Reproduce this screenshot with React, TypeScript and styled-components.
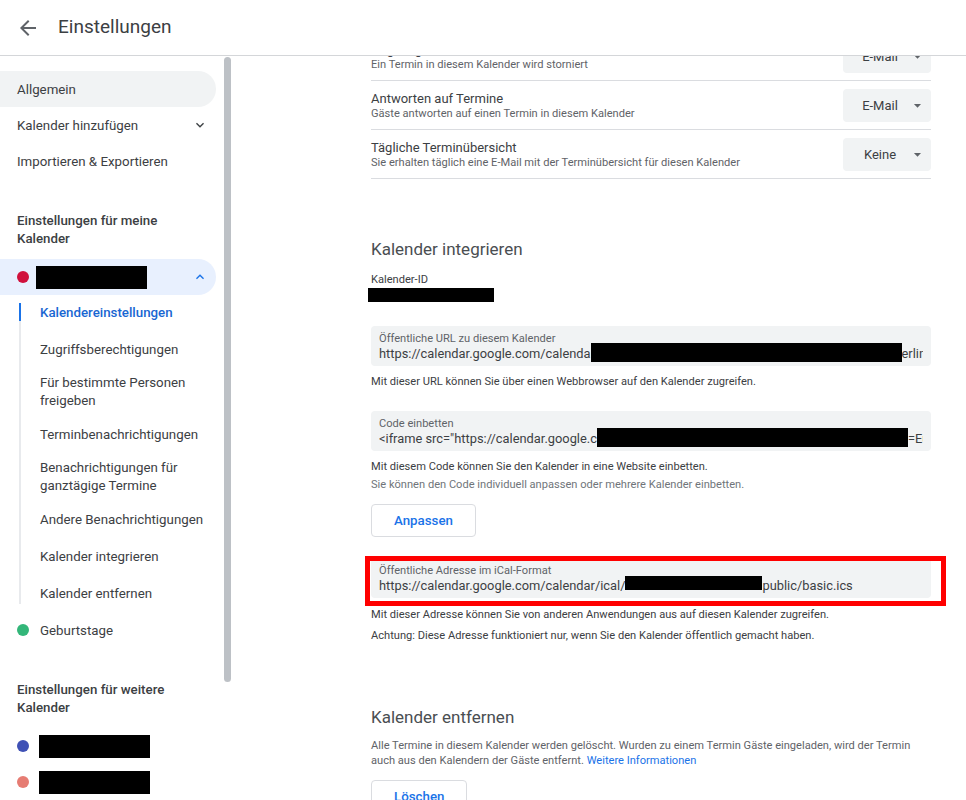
import React, { useLayoutEffect, useRef } from 'react'
import styled, { createGlobalStyle } from 'styled-components'

const GlobalStyle = createGlobalStyle`
  html, body {
    margin: 0;
    height: 100%;
  }
  body {
    font-family: Roboto, 'Liberation Sans', Arial, sans-serif;
    color: #3c4043;
    background: #ffffff;
    overflow: hidden;
  }
  #root {
    height: 100%;
  }
`

const Page = styled.div`
  display: flex;
  flex-direction: column;
  height: 100vh;
`

const Header = styled.header`
  flex: 0 0 auto;
  height: 55px;
  display: flex;
  align-items: center;
  border-bottom: 1px solid #d4d6d9;
  background: #ffffff;
`

const BackButton = styled.button`
  width: 40px;
  height: 40px;
  margin-left: 8px;
  padding: 0;
  border: 0;
  background: none;
  display: flex;
  align-items: center;
  justify-content: center;
  color: #5f6368;
  cursor: pointer;
`

const Title = styled.h1`
  margin: 0 0 2px 10px;
  font-size: 19px;
  font-weight: 400;
  color: #3c4043;
`

const Body = styled.div`
  flex: 1;
  display: flex;
  min-height: 0;
`

/* ---------- sidebar ---------- */

const Sidebar = styled.aside`
  flex: 0 0 232px;
  display: flex;
`

const Nav = styled.nav`
  width: 224px;
  padding-top: 15px;
  overflow: hidden;
`

const ScrollTrack = styled.div`
  width: 8px;
`

const ScrollThumb = styled.div`
  width: 7px;
  height: 625px;
  margin-top: 1px;
  border-radius: 4px;
  background: #bdc1c6;
`

const NavItem = styled.div<{ $bg?: string }>`
  display: flex;
  align-items: center;
  height: 36px;
  margin-right: 8px;
  padding: 0 8px 0 17px;
  border-radius: 0 18px 18px 0;
  font-size: 13.3px;
  color: #3c4043;
  background: ${(p) => p.$bg || 'transparent'};
  cursor: pointer;
`

const NavLabel = styled.span`
  flex: 1;
  white-space: nowrap;
`

const SectionTitle = styled.div`
  padding: 33px 16px 11px 17px;
  font-size: 13.3px;
  font-weight: 500;
  line-height: 18px;
  color: #3c4043;
`

const Dot = styled.span<{ $color: string }>`
  flex: 0 0 12px;
  width: 12px;
  height: 12px;
  margin-right: 11px;
  border-radius: 50%;
  background: ${(p) => p.$color};
`

const Redacted = styled.span<{ $w: number; $h: number; $shift?: number; $top?: number }>`
  display: inline-block;
  width: ${(p) => p.$w}px;
  height: ${(p) => p.$h}px;
  margin-left: ${(p) => p.$shift || 0}px;
  margin-top: ${(p) => p.$top || 0}px;
  margin-bottom: ${(p) => -(p.$top || 0)}px;
  vertical-align: top;
  background: #000000;
`

const SubList = styled.div`
  position: relative;
  width: 176px;
  margin-top: -1px;
  margin-left: 19px;
  padding-left: 21px;

  &::before {
    content: '';
    position: absolute;
    left: 0;
    top: 10px;
    bottom: 8px;
    width: 2px;
    background: #e8eaed;
  }
`

const SubItem = styled.div<{ $active?: boolean }>`
  position: relative;
  display: flex;
  align-items: center;
  min-height: 37px;
  padding: 6px 0;
  box-sizing: border-box;
  font-size: 13.3px;
  line-height: 18px;
  font-weight: ${(p) => (p.$active ? 500 : 400)};
  color: ${(p) => (p.$active ? '#1967d2' : '#3c4043')};

  &::before {
    content: '';
    display: ${(p) => (p.$active ? 'block' : 'none')};
    position: absolute;
    left: -21px;
    top: 9px;
    width: 2px;
    height: 18px;
    background: #1a73e8;
  }
`

/* ---------- main ---------- */

const Main = styled.main`
  position: relative;
  flex: 1;
  overflow: hidden;
`

const Content = styled.div`
  width: 560px;
  padding: 0 0 40px 139px;
`

const Heading = styled.h2<{ $top: number }>`
  margin: ${(p) => p.$top}px 0 0;
  font-size: 17px;
  font-weight: 400;
  line-height: 24px;
  color: #4a4e52;
`

const Row = styled.div`
  display: flex;
  align-items: center;
  justify-content: space-between;
  padding: 8px 0 7px;
  border-bottom: 1px solid #dadce0;
`

const RowTitle = styled.div`
  font-size: 13px;
  line-height: 16px;
  color: #3c4043;
`

const RowHint = styled.div`
  font-size: 11.1px;
  line-height: 14px;
  color: #5f6368;
`

const Select = styled.div`
  display: flex;
  align-items: center;
  gap: 4px;
  width: 88px;
  height: 33px;
  box-sizing: border-box;
  padding: 0 5px 0 12px;
  border-radius: 4px;
  background: #f1f3f4;
  font-size: 13px;
  color: #3c4043;
`

const SelectValue = styled.span`
  width: 50px;
  text-align: center;
`

const SmallLabel = styled.div<{ $top: number }>`
  margin-top: ${(p) => p.$top}px;
  font-size: 11.1px;
  line-height: 14px;
  color: #3c4043;
`

const IdValue = styled.div`
  height: 16px;
  font-size: 13px;
  line-height: 16px;
`

const Field = styled.div<{ $top?: number }>`
  height: 40px;
  box-sizing: border-box;
  margin-top: ${(p) => p.$top || 0}px;
  padding: 6px 8px 4px;
  border-radius: 4px;
  background: #f1f3f4;
`

const FieldLabel = styled.div`
  font-size: 11.1px;
  line-height: 14px;
  color: #5f6368;
`

const FieldValue = styled.div`
  margin-top: -3px;
  padding-top: 3px;
  font-size: 12.85px;
  line-height: 16px;
  color: #3c4043;
  white-space: nowrap;
  overflow: hidden;
`

const Helper = styled.p<{ $top: number; $muted?: boolean }>`
  margin: ${(p) => p.$top}px 0 0;
  font-size: 11.1px;
  line-height: 18px;
  color: ${(p) => (p.$muted ? '#70757a' : '#3c4043')};
`

const Paragraph = styled.p`
  margin: 9px 0 0;
  font-size: 11.1px;
  line-height: 15px;
  color: #5f6368;
`

const Link = styled.a`
  color: #1a73e8;
  text-decoration: none;
`

const OutlineButton = styled.button<{ $top: number }>`
  display: block;
  height: 33px;
  margin-top: ${(p) => p.$top}px;
  padding: 0 22px;
  border: 1px solid #dadce0;
  border-radius: 4px;
  background: #ffffff;
  font-family: Roboto, 'Liberation Sans', Arial, sans-serif;
  font-size: 13.3px;
  font-weight: 500;
  color: #1a73e8;
  cursor: pointer;
`

const Highlight = styled.div`
  position: relative;
  margin-top: 21px;

  &::after {
    content: '';
    position: absolute;
    left: -6px;
    right: -15px;
    top: -2px;
    bottom: -8px;
    border: 5px solid #ff0000;
    pointer-events: none;
  }
`

/* ---------- icons ---------- */

const Icon = ({ d, size, color }: { d: string; size: number; color: string }) => (
  <svg width={size} height={size} viewBox="0 0 24 24" fill={color} aria-hidden>
    <path d={d} />
  </svg>
)

const ARROW_BACK = 'M20 11H7.83l5.59-5.59L12 4l-8 8 8 8 1.41-1.41L7.83 13H20v-2z'
const EXPAND_MORE = 'M16.59 8.59L12 13.17 7.41 8.59 6 10l6 6 6-6z'
const EXPAND_LESS = 'M12 8l-6 6 1.41 1.41L12 10.83l4.59 4.58L18 14z'
const DROP_DOWN = 'M7 10l5 5 5-5z'

const Dropdown = ({ value }: { value: string }) => (
  <Select>
    <SelectValue>{value}</SelectValue>
    <Icon d={DROP_DOWN} size={17} color="#5f6368" />
  </Select>
)

const notificationRows = [
  ['Neue Termine', 'Jemand lädt Sie zu einem Termin ein', 'E-Mail'],
  ['Geänderte Termine', 'Jemand ändert einen Termin', 'E-Mail'],
  ['Abgesagte Termine', 'Ein Termin in diesem Kalender wird storniert', 'E-Mail'],
  ['Antworten auf Termine', 'Gäste antworten auf einen Termin in diesem Kalender', 'E-Mail'],
  ['Tägliche Terminübersicht', 'Sie erhalten täglich eine E-Mail mit der Terminübersicht für diesen Kalender', 'Keine'],
]

const subItems = [
  'Kalendereinstellungen',
  'Zugriffsberechtigungen',
  'Für bestimmte Personen freigeben',
  'Terminbenachrichtigungen',
  'Benachrichtigungen für ganztägige Termine',
  'Andere Benachrichtigungen',
  'Kalender integrieren',
  'Kalender entfernen',
]

const App: React.FC = () => {
  const mainRef = useRef<HTMLElement>(null)
  const anchorRef = useRef<HTMLDivElement>(null)

  // the page is shown scrolled down to the "Abgesagte Termine" row
  useLayoutEffect(() => {
    if (mainRef.current && anchorRef.current) {
      mainRef.current.scrollTop = anchorRef.current.offsetTop + 24
    }
  }, [])

  return (
    <Page>
      <GlobalStyle />
      <Header>
        <BackButton aria-label="Zurück">
          <Icon d={ARROW_BACK} size={24} color="#5f6368" />
        </BackButton>
        <Title>Einstellungen</Title>
      </Header>

      <Body>
        <Sidebar>
          <Nav>
            <NavItem $bg="#f1f3f4">
              <NavLabel>Allgemein</NavLabel>
            </NavItem>
            <NavItem>
              <NavLabel>Kalender hinzufügen</NavLabel>
              <Icon d={EXPAND_MORE} size={16} color="#3c4043" />
            </NavItem>
            <NavItem>
              <NavLabel>Importieren &amp; Exportieren</NavLabel>
            </NavItem>

            <SectionTitle>Einstellungen für meine Kalender</SectionTitle>
            <NavItem $bg="#e8f0fe">
              <Dot $color="#d0103c" />
              <NavLabel>
                <Redacted $w={111} $h={23} $shift={-4} />
              </NavLabel>
              <Icon d={EXPAND_LESS} size={16} color="#1a73e8" />
            </NavItem>
            <SubList>
              {subItems.map((label, i) => (
                <SubItem key={label} $active={i === 0}>
                  {label}
                </SubItem>
              ))}
            </SubList>
            <NavItem>
              <Dot $color="#33b679" />
              <NavLabel>Geburtstage</NavLabel>
            </NavItem>

            <SectionTitle>Einstellungen für weitere Kalender</SectionTitle>
            <NavItem>
              <Dot $color="#3f51b5" />
              <NavLabel>
                <Redacted $w={111} $h={23} $shift={-1} />
              </NavLabel>
            </NavItem>
            <NavItem>
              <Dot $color="#e67c73" />
              <NavLabel>
                <Redacted $w={111} $h={23} $shift={-1} />
              </NavLabel>
            </NavItem>
          </Nav>
          <ScrollTrack>
            <ScrollThumb />
          </ScrollTrack>
        </Sidebar>

        <Main ref={mainRef}>
          <Content>
            <Heading $top={24}>Allgemeine Benachrichtigungen</Heading>
            {notificationRows.map(([title, hint, value]) => (
              <Row key={title} ref={title === 'Abgesagte Termine' ? anchorRef : undefined}>
                <div>
                  <RowTitle>{title}</RowTitle>
                  <RowHint>{hint}</RowHint>
                </div>
                <Dropdown value={value} />
              </Row>
            ))}

            <Heading $top={58}>Kalender integrieren</Heading>
            <SmallLabel $top={12}>Kalender-ID</SmallLabel>
            <IdValue>
              <Redacted $w={126} $h={14} $shift={-3} $top={1} />
            </IdValue>

            <Field $top={23}>
              <FieldLabel>Öffentliche URL zu diesem Kalender</FieldLabel>
              <FieldValue>
                https://calendar.google.com/calenda
                <Redacted $w={311} $h={19} $top={-3} />
                erlin&amp;ctz=Europe%2FBerlin
              </FieldValue>
            </Field>
            <Helper $top={7}>Mit dieser URL können Sie über einen Webbrowser auf den Kalender zugreifen.</Helper>

            <Field $top={20}>
              <FieldLabel>Code einbetten</FieldLabel>
              <FieldValue>
                &lt;iframe src="https://calendar.google.c
                <Redacted $w={311} $h={19} $top={-3} />
                =Europe%2FBerlin" style="border: 0"&gt;
              </FieldValue>
            </Field>
            <Helper $top={7}>Mit diesem Code können Sie den Kalender in eine Website einbetten.</Helper>
            <Helper $top={0} $muted>
              Sie können den Code individuell anpassen oder mehrere Kalender einbetten.
            </Helper>
            <OutlineButton $top={10}>Anpassen</OutlineButton>

            <Highlight>
              <Field>
                <FieldLabel>Öffentliche Adresse im iCal-Format</FieldLabel>
                <FieldValue>
                  https://calendar.google.com/calendar/ical/
                  <Redacted $w={137} $h={14} $top={-2} />
                  public/basic.ics
                </FieldValue>
              </Field>
            </Highlight>
            <Helper $top={8}>
              Mit dieser Adresse können Sie von anderen Anwendungen aus auf diesen Kalender zugreifen.
            </Helper>
            <Helper $top={3}>
              Achtung: Diese Adresse funktioniert nur, wenn Sie den Kalender öffentlich gemacht haben.
            </Helper>

            <Heading $top={60}>Kalender entfernen</Heading>
            <Paragraph>
              Alle Termine in diesem Kalender werden gelöscht. Wurden zu einem Termin Gäste eingeladen, wird der Termin
              auch aus den Kalendern der Gäste entfernt. <Link href="#">Weitere Informationen</Link>
            </Paragraph>
            <OutlineButton $top={12}>Löschen</OutlineButton>
          </Content>
        </Main>
      </Body>
    </Page>
  )
}

export default App
